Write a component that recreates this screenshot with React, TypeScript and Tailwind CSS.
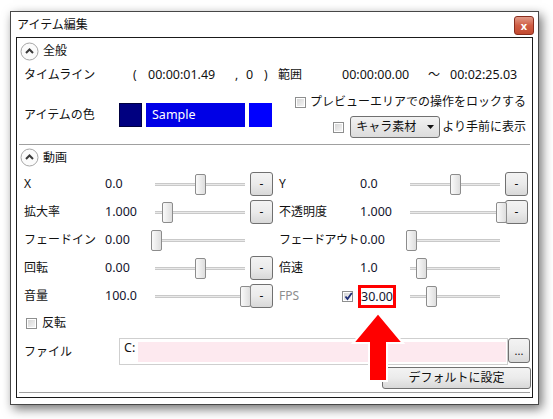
import React from 'react';

const FONT = "font-['Noto_Sans','Noto_Sans_CJK_JP',sans-serif]";

interface SliderRow {
  label: string;
  value: string;
  thumb: number;
  button: boolean;
  muted?: boolean;
  checkbox?: boolean;
  marked?: boolean;
  tight?: boolean;
}

const rows: [SliderRow, SliderRow][] = [
  [
    { label: 'X', value: '0.0', thumb: 45, button: true },
    { label: 'Y', value: '0.0', thumb: 45, button: true },
  ],
  [
    { label: '拡大率', value: '1.000', thumb: 12, button: true },
    { label: '不透明度', value: '1.000', thumb: 91, button: true },
  ],
  [
    { label: 'フェードイン', value: '0.00', thumb: 1, button: false },
    { label: 'フェードアウト', value: '0.00', thumb: 1, button: false, tight: true },
  ],
  [
    { label: '回転', value: '0.00', thumb: 45, button: true },
    { label: '倍速', value: '1.0', thumb: 11, button: false },
  ],
  [
    { label: '音量', value: '100.0', thumb: 90, button: true },
    { label: 'FPS', value: '30.00', thumb: 21, button: false, muted: true, checkbox: true, marked: true },
  ],
];

function Checkbox({ checked = false }: { checked?: boolean }) {
  return (
    <span className="relative w-[11px] h-[11px] shrink-0 border border-[#8e8f8f] bg-white p-px">
      <span className="block w-full h-full bg-gradient-to-br from-[#d6d6d6] to-[#f4f4f4]" />
      {checked && (
        <svg className="absolute left-[1px] top-[0px]" width="9" height="9" viewBox="0 0 9 9">
          <path d="M1.5 4.5 L3.5 7 L7.8 1" stroke="#1f2e78" strokeWidth="1.8" fill="none" />
        </svg>
      )}
    </span>
  );
}

function CollapseIcon() {
  return (
    <svg width="19" height="19" viewBox="0 0 19 19">
      <circle cx="9.5" cy="9.5" r="8.5" fill="#fbfbfb" stroke="#a6a6a6" />
      <path d="M6 11 L9.5 7.5 L13 11" stroke="#3a3a3a" strokeWidth="2" fill="none" />
    </svg>
  );
}

function SmallButton({ children, className = '' }: { children: React.ReactNode; className?: string }) {
  return (
    <div
      className={`flex items-center justify-center rounded-[3px] border border-[#707070] bg-gradient-to-b from-[#f3f3f3] via-[#ebebeb] to-[#d8d8d8] text-[12px] text-[#111] ${className}`}
    >
      {children}
    </div>
  );
}

function Slider({ thumb }: { thumb: number }) {
  return (
    <div className="relative w-[100px] h-[22px] shrink-0">
      <div className="absolute left-[5px] right-[5px] top-[10px] h-[3px] bg-[#e9e9e9] border-y border-[#c9c9c9]" />
      <div
        className="absolute top-[1px] w-[11px] h-[21px] rounded-[2px] border border-[#8c8c8c] bg-gradient-to-r from-[#fafafa] to-[#dedede]"
        style={{ left: thumb }}
      />
    </div>
  );
}

function Half({ row }: { row: SliderRow }) {
  return (
    <div className="w-[249px] flex items-center">
      {row.checkbox ? (
        <div className="w-[81px] flex items-center">
          <span className="w-[63px] text-[12px] text-[#8d8d8d]">{row.label}</span>
          <Checkbox checked />
        </div>
      ) : (
        <span
          className={`w-[81px] text-[12px] text-[#111] whitespace-nowrap ${row.tight ? 'tracking-[-0.6px]' : ''}`}
        >
          {row.label}
        </span>
      )}
      <div className="w-[45px] flex">
        <span
          className={`text-[12.5px] text-[#14142e] whitespace-nowrap ${
            row.marked ? 'ml-[1px] leading-[17px] outline outline-[3px] outline-[#f00]' : ''
          }`}
        >
          {row.value}
        </span>
      </div>
      <Slider thumb={row.thumb} />
      {row.button && <SmallButton className="w-[23px] h-[24px] shrink-0">-</SmallButton>}
    </div>
  );
}

export default function App() {
  return (
    <div className={`relative w-[553px] h-[419px] bg-white overflow-hidden ${FONT}`}>
      <div className="pl-[10px] pt-[11px]">
        <div className="w-[529px] h-[394px] border border-[#474747] bg-white shadow-[3px_4px_10px_rgba(0,0,0,0.55)] flex flex-col">
          {/* title bar */}
          <div className="h-[25px] flex items-start justify-between pl-[6px] pr-[4px]">
            <span className="mt-[4px] text-[12px] text-[#111]">アイテム編集</span>
            <div className="mt-[4px] w-[20px] h-[19px] rounded-[3px] border border-[#8a2d1e] bg-gradient-to-b from-[#e09a88] via-[#cf5d44] to-[#c24a30] flex items-center justify-center">
              <span className="text-[11px] leading-none font-bold text-white">x</span>
            </div>
          </div>

          {/* content panel */}
          <div className="ml-[5px] w-[517px] h-[361px] border border-[#1a1a1a] bg-white flex flex-col">
            <div className="h-[26px] flex items-center pl-[3px] gap-[4px]">
              <CollapseIcon />
              <span className="text-[12px] text-[#111]">全般</span>
            </div>

            <div className="h-[22px] flex items-center pl-[7px] text-[12px] text-[#111] whitespace-nowrap">
              <span className="w-[109px]">タイムライン</span>
              <span className="w-[15px]">(</span>
              <span className="w-[87px] text-[12.5px]">00:00:01.49</span>
              <span className="w-[11px]">,</span>
              <span className="w-[18px] text-[12.5px]">0</span>
              <span className="w-[14px]">)</span>
              <span className="w-[64px]">範囲</span>
              <span className="w-[86px] text-[12.5px]">00:00:00.00</span>
              <span className="w-[22px]">〜</span>
              <span className="text-[12.5px]">00:02:25.03</span>
            </div>

            <div className="h-[54px] flex pl-[7px] pr-[6px]">
              <div className="mt-[17px] h-[24px] flex items-center">
                <span className="w-[95px] text-[12px] text-[#111]">アイテムの色</span>
                <div className="w-[23px] h-[24px] bg-[#000080] border border-[#000040]" />
                <div className="ml-[4px] w-[99px] h-[24px] bg-[#0000e6] flex items-center pl-[6px]">
                  <span className="text-[12.5px] text-white">Sample</span>
                </div>
                <div className="ml-[4px] w-[23px] h-[24px] bg-[#0000ff]" />
              </div>
              <div className="ml-auto flex flex-col items-end">
                <div className="mt-[9px] h-[14px] flex items-center gap-[4px]">
                  <Checkbox />
                  <span className="text-[12px] text-[#111] whitespace-nowrap">プレビューエリアでの操作をロックする</span>
                </div>
                <div className="mt-[7px] h-[22px] flex items-center">
                  <Checkbox />
                  <div className="ml-[6px] w-[90px] h-[22px] rounded-[3px] border border-[#707070] bg-gradient-to-b from-[#f2f2f2] to-[#dcdcdc] flex items-center pl-[5px] pr-[5px]">
                    <span className="text-[12px] text-[#111]">キャラ素材</span>
                    <svg className="ml-auto" width="7" height="4" viewBox="0 0 7 4">
                      <path d="M0 0 H7 L3.5 4 Z" fill="#111" />
                    </svg>
                  </div>
                  <span className="ml-[2px] text-[12px] text-[#111] whitespace-nowrap">より手前に表示</span>
                </div>
              </div>
            </div>

            <div className="mt-[4px] mx-[2px] h-px bg-[#a0a0a0]" />

            <div className="h-[25px] flex items-center pl-[3px] gap-[4px]">
              <CollapseIcon />
              <span className="text-[12px] text-[#111]">動画</span>
            </div>

            {rows.map((pair, i) => (
              <div key={i} className="h-[28px] flex items-center pl-[7px] gap-[6px]">
                <Half row={pair[0]} />
                <Half row={pair[1]} />
              </div>
            ))}

            <div className="h-[26px] flex items-center pl-[9px] gap-[5px]">
              <Checkbox />
              <span className="text-[12px] text-[#111]">反転</span>
            </div>

            <div className="mt-[2px] h-[27px] flex items-center pl-[7px]">
              <span className="w-[95px] text-[12px] text-[#111]">ファイル</span>
              <div className="w-[389px] h-[27px] border border-[#cfcfcf] bg-white flex items-start">
                <span className="pl-[4px] pt-[1px] w-[18px] text-[12.5px] leading-[16px] text-[#111]">C:</span>
                <div className="mt-[3px] mr-px h-[20px] flex-1 bg-[#fde9ef]" />
              </div>
              <SmallButton className="w-[22px] h-[25px] self-start">
                <span className="text-[11px] leading-none">...</span>
              </SmallButton>
            </div>

            <div className="mt-[2px] self-end mr-[1px]">
              <SmallButton className="w-[149px] h-[22px]">デフォルトに設定</SmallButton>
            </div>

            <div className="mt-[3px] mx-[2px] h-px bg-[#a0a0a0]" />
          </div>
        </div>
      </div>

      {/* annotation arrow */}
      <svg className="absolute left-0 top-0 pointer-events-none" width="553" height="419" viewBox="0 0 553 419">
        <path
          d="M378 313 L403 343 L387 343 L387 381 L369 381 L369 343 L353 343 Z"
          fill="#f00"
          stroke="#fff"
          strokeWidth="2"
        />
      </svg>
    </div>
  );
}
